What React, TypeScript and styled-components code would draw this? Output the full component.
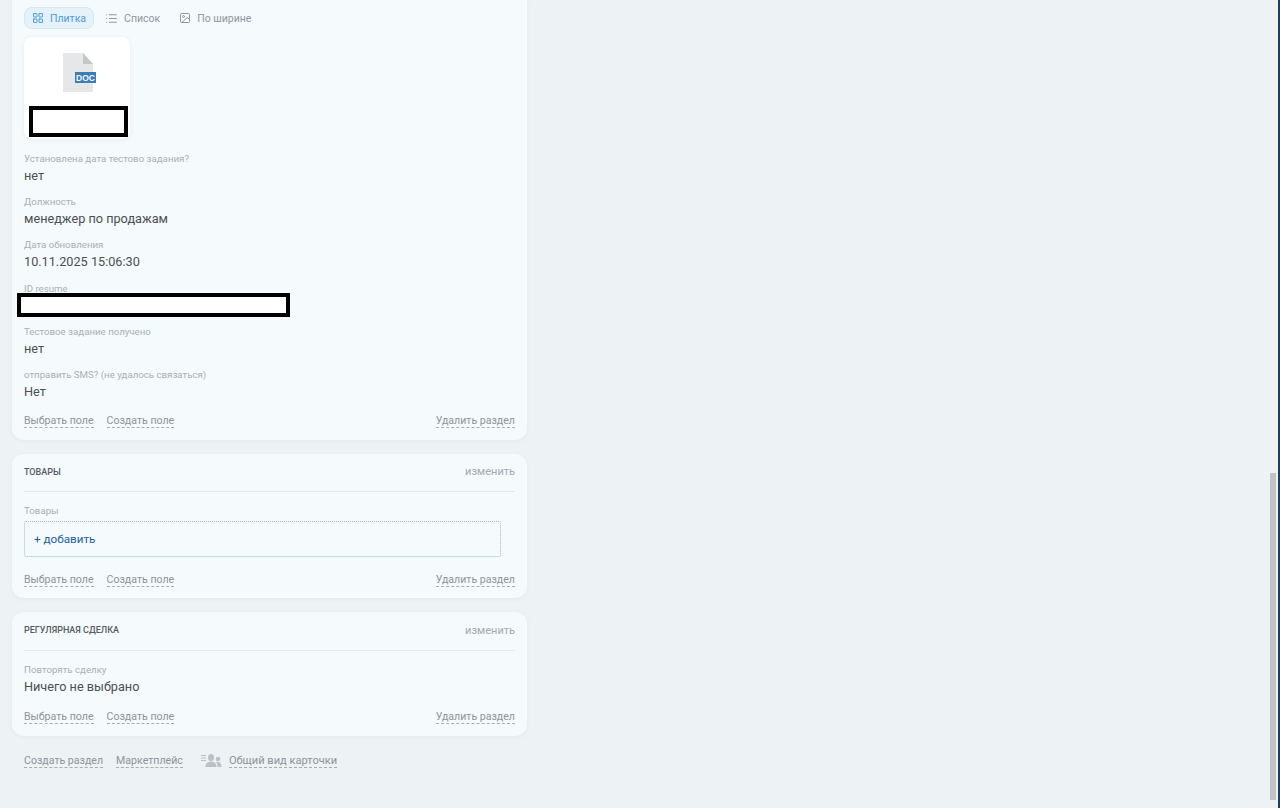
import React from 'react';
import styled, { createGlobalStyle } from 'styled-components';
import { LayoutGrid, List, Image } from 'lucide-react';

const GlobalStyle = createGlobalStyle`
  html, body {
    margin: 0;
    height: 100%;
    overflow: hidden;
    background: #edf2f5;
  }
  * { box-sizing: border-box; }
`;

const Page = styled.div`
  position: relative;
  width: 1280px;
  height: 808px;
  overflow: hidden;
  padding-left: 12px;
  font-family: Roboto, 'Noto Sans', sans-serif;
  background: #edf2f5;
  border-right: 2px solid #1f3c68;
`;

const Column = styled.div`
  width: 515px;
  display: flex;
  flex-direction: column;
  gap: 14px;
`;

const Card = styled.section<{ $bottom?: number }>`
  background: #f5fafc;
  border-radius: 0 0 12px 12px;
  padding: 0 12px ${({ $bottom }) => $bottom ?? 12}px;
  box-shadow: 0 1px 4px rgba(160, 175, 190, 0.12);

  & + & {
    border-radius: 12px;
  }
`;

const Tabs = styled.div`
  display: flex;
  align-items: center;
  height: 36px;
  margin-bottom: 1px;
  gap: 3px;
`;

const Tab = styled.div<{ $active?: boolean }>`
  display: flex;
  align-items: center;
  gap: 6px;
  height: 22px;
  padding: 0 7px;
  font-size: 10.5px;
  border-radius: 8px;
  color: ${({ $active }) => ($active ? '#4a9bd8' : '#8f979e')};
  background: ${({ $active }) => ($active ? '#e6f2fa' : 'transparent')};
  border: 1px solid ${({ $active }) => ($active ? '#d3e7f4' : 'transparent')};
`;

const FileTile = styled.div`
  position: relative;
  width: 106px;
  height: 102px;
  background: #fff;
  border-radius: 8px;
  box-shadow: 0 1px 4px rgba(160, 175, 190, 0.2);
  display: flex;
  justify-content: center;
  padding: 16px 0 0 4px;
`;

const Redaction = styled.div<{ $width: number; $height: number; $left: number; $top: number }>`
  position: absolute;
  left: ${({ $left }) => $left}px;
  top: ${({ $top }) => $top}px;
  width: ${({ $width }) => $width}px;
  height: ${({ $height }) => $height}px;
  background: #fff;
  border: 4px solid #000;
`;

const Fields = styled.div`
  display: flex;
  flex-direction: column;
  gap: 9.2px;
  margin-top: 13px;
`;

const Field = styled.div`
  position: relative;
  display: flex;
  flex-direction: column;
  height: 34px;
`;

const Label = styled.div`
  font-size: 9.7px;
  line-height: 13px;
  color: #a9b0b6;
`;

const Value = styled.div`
  margin-top: 2px;
  font-size: 12.7px;
  line-height: 18px;
  color: #4a4f52;
`;

const Actions = styled.div`
  display: flex;
  gap: 13px;
  margin-top: 12px;
`;

const DashLink = styled.span<{ $push?: boolean; $gap?: number; $size?: number }>`
  font-size: ${({ $size }) => $size ?? 10.6}px;
  line-height: 13px;
  color: #8d9499;
  border-bottom: 1px dashed #a6adb2;
  margin-left: ${({ $push, $gap }) => ($push ? 'auto' : `${$gap ?? 0}px`)};
`;

const CardHead = styled.div<{ $height: number }>`
  display: flex;
  justify-content: space-between;
  align-items: center;
  height: ${({ $height }) => $height}px;
  padding-bottom: 1px;
  border-bottom: 1px solid #e4e9ec;
`;

const CardTitle = styled.div`
  font-size: 9px;
  font-weight: 500;
  text-transform: uppercase;
  color: #555c60;
`;

const EditLink = styled.span`
  font-size: 11px;
  color: #a3a9ae;
`;

const AddBox = styled.div`
  width: 477px;
  height: 36px;
  margin-top: 4px;
  display: flex;
  align-items: center;
  padding-left: 9px;
  font-size: 11.7px;
  color: #22629b;
  border: 1px dotted #9fbcc8;
  border-radius: 2px;
`;

const BodyBlock = styled.div<{ $after: number }>`
  padding: 12px 0 ${({ $after }) => $after}px;
`;

const Footer = styled.div`
  display: flex;
  align-items: center;
  margin: 18px 0 0 12px;
`;

const FooterGroup = styled.div`
  display: flex;
  align-items: center;
  gap: 7px;
  margin-left: 18px;
`;

const Scrollbar = styled.div`
  position: absolute;
  right: 2px;
  top: 473px;
  width: 6px;
  height: 327px;
  background: #bfc5c4;
`;

const DocIcon = () => (
  <svg width="34" height="40" viewBox="0 0 34 40">
    <path d="M1 0H21L31 11V39H1Z" fill="#e6e7e9" />
    <path d="M21 0L31 11H21Z" fill="#c4c6c8" />
    <rect x="13" y="19" width="21" height="11" fill="#3d7db5" />
    <text x="23.5" y="27.8" textAnchor="middle" fontSize="8.5" fontWeight="700" fontFamily="Liberation Sans, sans-serif" fill="#f4f8fb">DOC</text>
  </svg>
);

const PeopleIcon = () => (
  <svg width="21" height="14" viewBox="0 0 21 14" fill="#bcc1c5">
    <rect x="0" y="1" width="5" height="1" />
    <rect x="0" y="3.5" width="5" height="1" />
    <rect x="0" y="6" width="5" height="1" />
    <ellipse cx="10" cy="3.5" rx="3" ry="3.5" />
    <path d="M4.500 13c0-3.500 2-5.500 5.500-5.500s5.500 2 5.500 5.500Z" />
    <circle cx="17" cy="5" r="2.300" />
    <path d="M16.500 13c0-2.500-.5-3.500-1.500-4.500 1-.8 5.500-1 5.500 4.500Z" />
  </svg>
);

const fields = [
  { label: 'Установлена дата тестово задания?', value: 'нет' },
  { label: 'Должность', value: 'менеджер по продажам' },
  { label: 'Дата обновления', value: '10.11.2025 15:06:30' },
  { label: 'ID resume', value: '', hidden: true },
  { label: 'Тестовое задание получено', value: 'нет' },
  { label: 'отправить SMS? (не удалось связаться)', value: 'Нет' },
];

const CardActions = () => (
  <Actions>
    <DashLink>Выбрать поле</DashLink>
    <DashLink>Создать поле</DashLink>
    <DashLink $push>Удалить раздел</DashLink>
  </Actions>
);

export default function App() {
  return (
    <Page>
      <GlobalStyle />
      <Column>
        <Card>
          <Tabs>
            <Tab $active><LayoutGrid size={12} />Плитка</Tab>
            <Tab><List size={13} />Список</Tab>
            <Tab><Image size={12} />По ширине</Tab>
          </Tabs>
          <FileTile>
            <DocIcon />
            <Redaction $left={5} $top={69} $width={99} $height={31} />
          </FileTile>
          <Fields>
            {fields.map((f) => (
              <Field key={f.label}>
                <Label>{f.label}</Label>
                {f.hidden ? (
                  <Redaction $left={-7} $top={11} $width={273} $height={24} />
                ) : (
                  <Value>{f.value}</Value>
                )}
              </Field>
            ))}
          </Fields>
          <CardActions />
        </Card>
        <Card $bottom={11}>
          <CardHead $height={38}>
            <CardTitle>Товары</CardTitle>
            <EditLink>изменить</EditLink>
          </CardHead>
          <BodyBlock $after={4}>
            <Label>Товары</Label>
            <AddBox>+ добавить</AddBox>
          </BodyBlock>
          <CardActions />
        </Card>
        <Card>
          <CardHead $height={39}>
            <CardTitle>Регулярная сделка</CardTitle>
            <EditLink>изменить</EditLink>
          </CardHead>
          <BodyBlock $after={2}>
            <Label>Повторять сделку</Label>
            <Value>Ничего не выбрано</Value>
          </BodyBlock>
          <CardActions />
        </Card>
      </Column>
      <Footer>
        <DashLink>Создать раздел</DashLink>
        <DashLink $gap={13}>Маркетплейс</DashLink>
        <FooterGroup>
          <PeopleIcon />
          <DashLink $size={11.1}>Общий вид карточки</DashLink>
        </FooterGroup>
      </Footer>
      <Scrollbar />
    </Page>
  );
}
